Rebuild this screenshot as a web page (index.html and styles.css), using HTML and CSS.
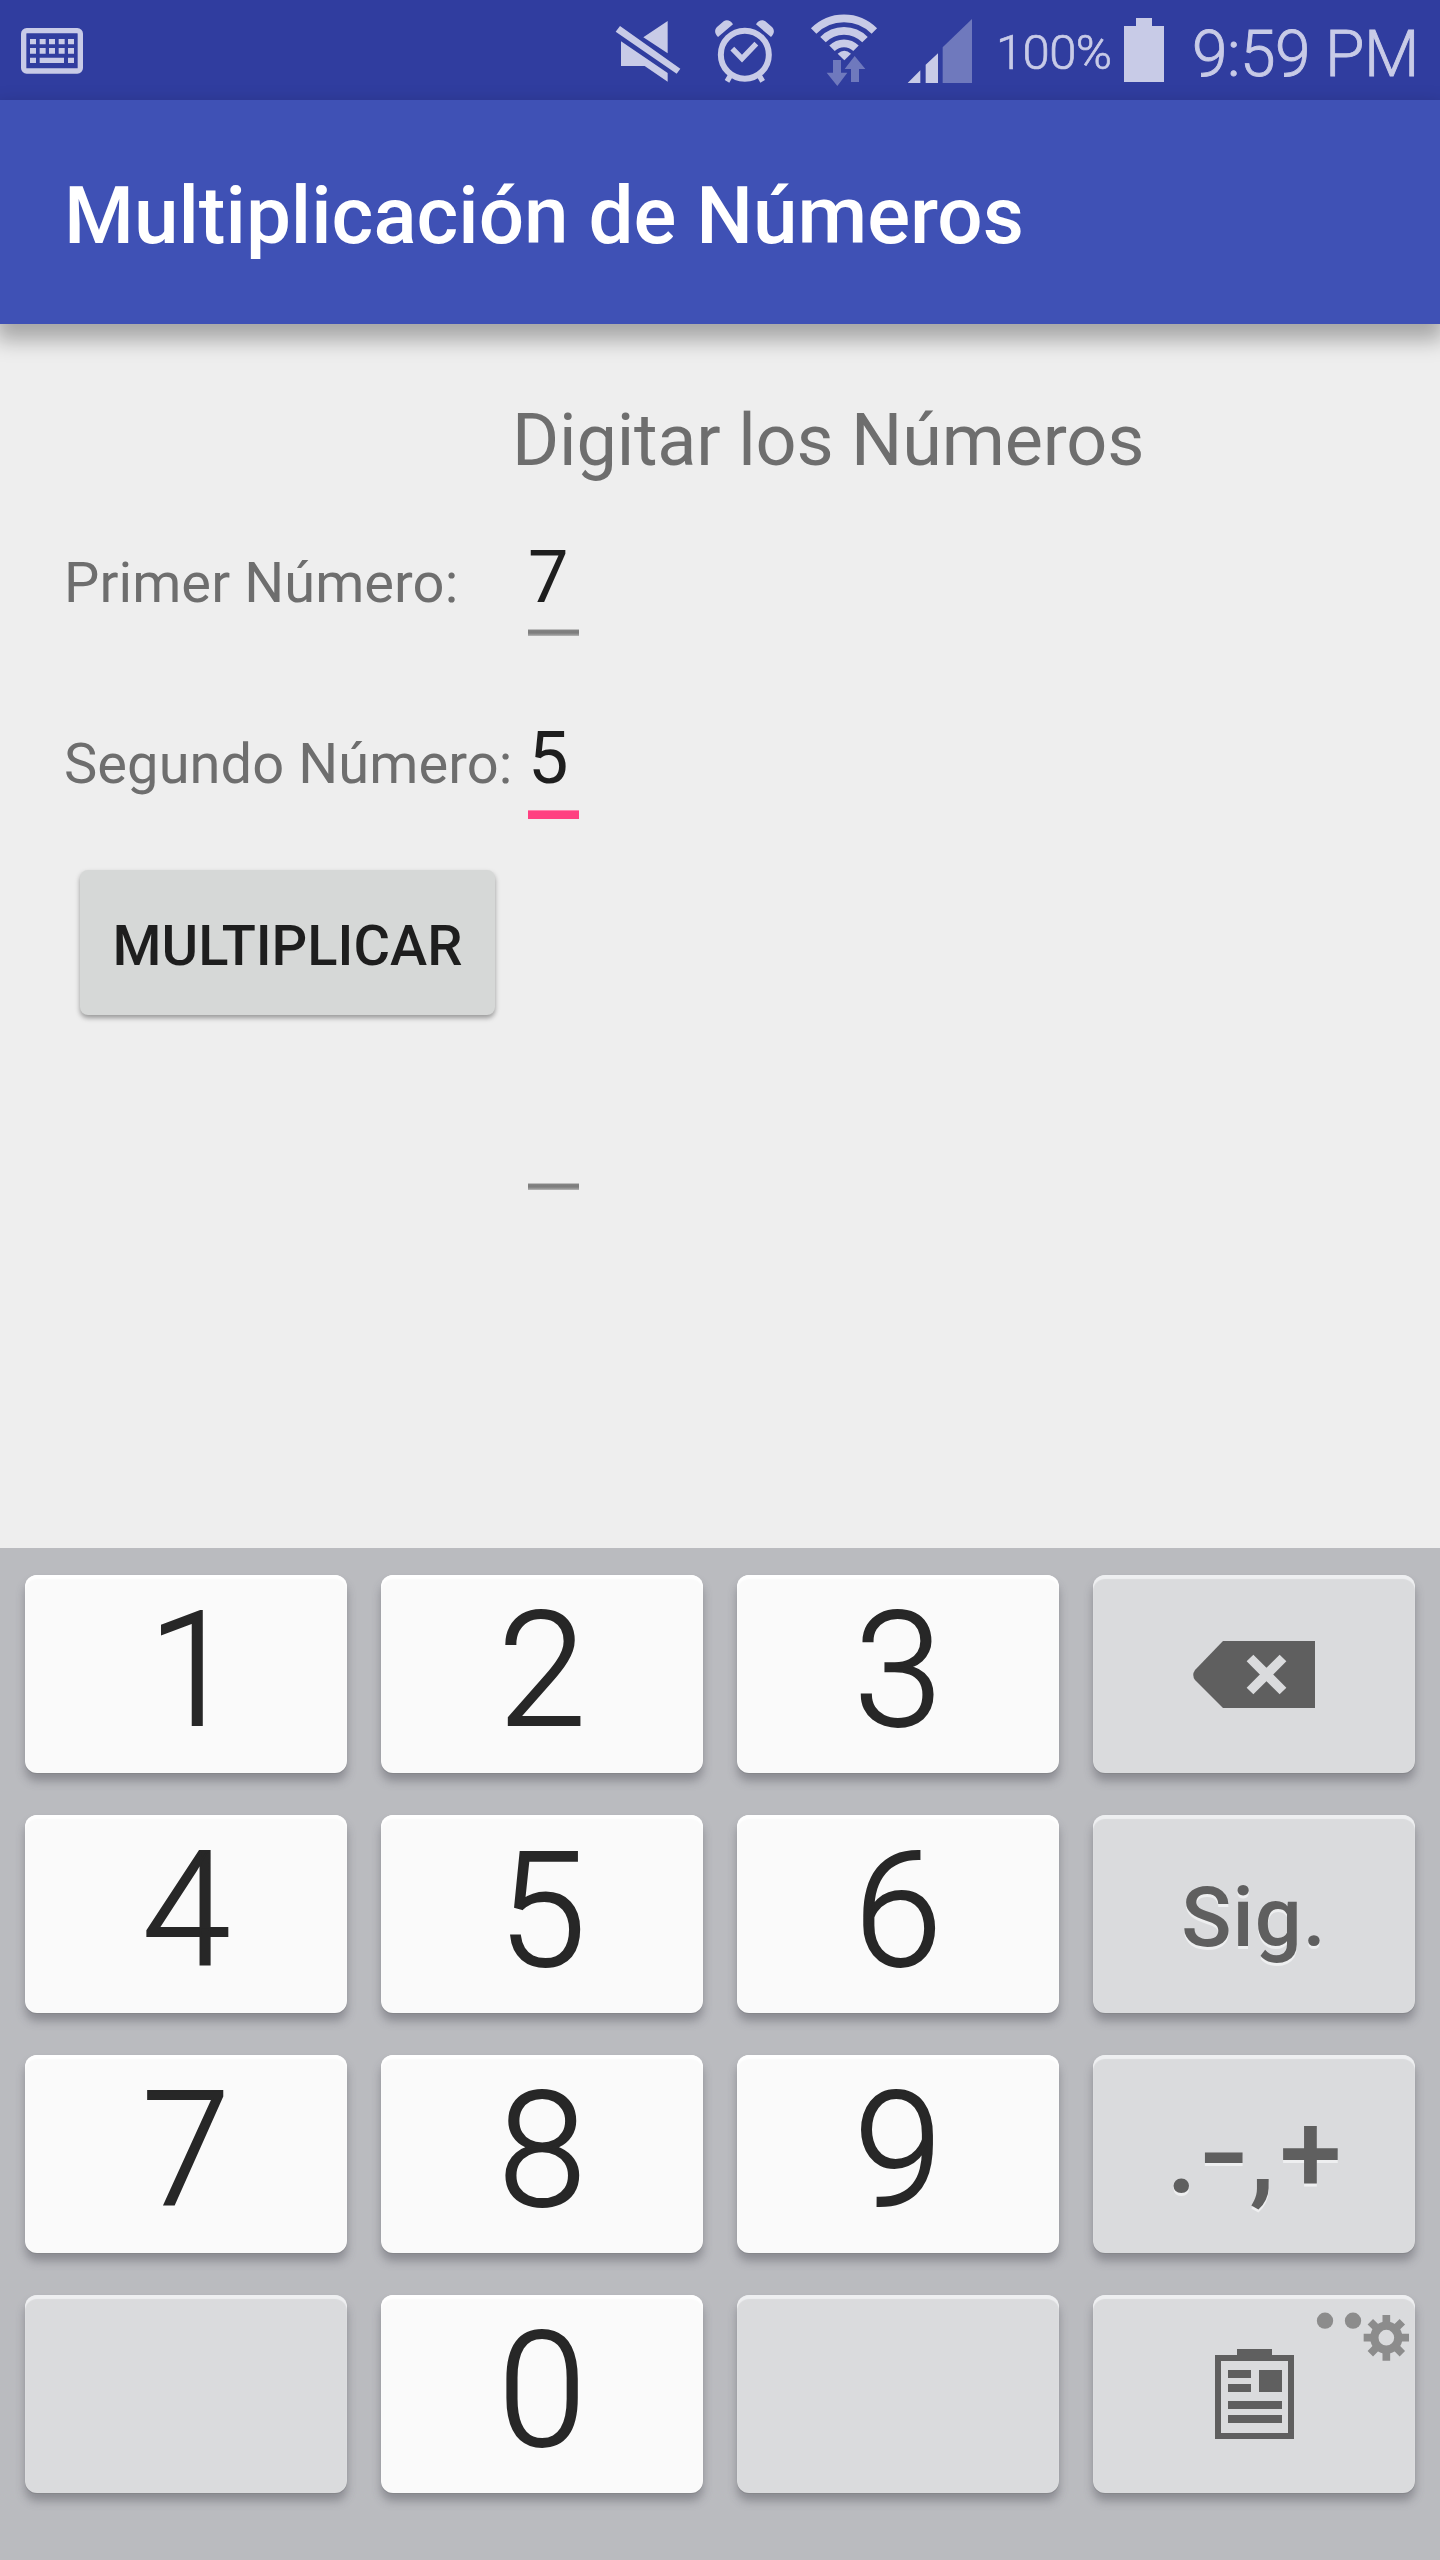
FILE: index.html
```html
<!DOCTYPE html>
<html lang="es">
<head>
<meta charset="utf-8">
<title>Multiplicación de Números</title>
<link rel="stylesheet" href="styles.css">
</head>
<body>
<div class="screen">
  <div class="status-bar">
    <svg class="status-icon keyboard-icon" viewBox="63 0 186 300">
      <rect x="71" y="92" width="170" height="121" rx="9" fill="none" stroke="currentColor" stroke-width="16"/>
      <path fill="currentColor" d="M90 117h18v16H90zM119 117h18v16h-18zM147 117h18v16h-18zM176 117h18v16h-18zM204 117h18v16h-18zM90 144h18v17H90zM119 144h18v17h-18zM147 144h18v17h-18zM176 144h18v17h-18zM204 144h18v17h-18zM90 173h18v16H90zM119 173h73v16h-73zM204 173h18v16h-18z"/>
    </svg>
    <svg class="status-icon mute-icon" viewBox="75 0 198 300" fill="currentColor">
      <path d="M160 112L233 63V160ZM90 78L271 206L260 221L77 95ZM93 124L233 219V245L164 198H93Z"/>
    </svg>
    <svg class="status-icon alarm-icon" viewBox="372 0 183 300">
      <circle cx="464.500" cy="164" r="72" fill="none" stroke="currentColor" stroke-width="18"/>
      <path d="M427 146L456 176L499 131" fill="none" stroke="currentColor" stroke-width="16"/>
      <path d="M424 222L411 244M505 222L518 244" stroke="currentColor" stroke-width="16"/>
      <path fill="currentColor" d="M384 111L429 73C422 61 410 57 401 64L381 81C373 89 373 101 384 111ZM543 111L498 73C505 61 517 57 526 64L546 81C554 89 554 101 543 111Z"/>
    </svg>
    <svg class="status-icon wifi-icon" viewBox="660 0 204 300">
      <g fill="none" stroke="currentColor" stroke-width="23">
        <path d="M671 93A128 128 0 0 1 853 93"/>
        <path d="M699 119A88 88 0 0 1 825 119"/>
        <path d="M726 145A51 51 0 0 1 798 145"/>
      </g>
      <path fill="currentColor" d="M743 161Q763 144 783 161L763 181Z"/>
      <path class="dim" d="M729 180H753V218H772L742 258L710 218H729ZM783 246V207H764L794 168L826 207H807V246Z"/>
    </svg>
    <svg class="status-icon signal-icon" viewBox="951 0 198 300" fill="currentColor">
      <path d="M953 249H991V211ZM1007 249V194L1044 160V249Z"/>
      <path class="dim" d="M1058 249V142L1146 57V249Z"/>
    </svg>
    <span class="battery-level">100%</span>
    <svg class="status-icon battery-icon" viewBox="0 0 40 100" fill="currentColor">
      <path d="M12 18H28V26H40V82H0V26H12Z"/>
    </svg>
    <span class="clock">9:59 PM</span>
  </div>

  <header class="app-bar"><h1>Multiplicación de Números</h1></header>

  <main class="content">
    <div class="heading">Digitar los Números</div>
    <div class="row">
      <label class="label">Primer Número:</label>
      <div class="field">7</div>
    </div>
    <div class="row">
      <label class="label">Segundo Número:</label>
      <div class="field focused">5</div>
    </div>
    <button class="action">MULTIPLICAR</button>
    <div class="row result">
      <span class="label"></span>
      <div class="field">&nbsp;</div>
    </div>
  </main>

  <div class="keypad">
    <div class="key one">1</div>
    <div class="key">2</div>
    <div class="key">3</div>
    <div class="key fn icon">
      <svg width="122" height="67" viewBox="0 0 122 67">
        <path fill="#5f5f5f" d="M30 0H122V67H30L2 39Q-1.500 34 2 29Z"/>
        <path d="M57 17L90 50M90 17L57 50" stroke="#dadbdd" stroke-width="9.500"/>
      </svg>
    </div>
    <div class="key">4</div>
    <div class="key">5</div>
    <div class="key">6</div>
    <div class="key fn next">Sig.</div>
    <div class="key">7</div>
    <div class="key">8</div>
    <div class="key">9</div>
    <div class="key fn symbols"><span>.</span><span class="dash">-</span><span>,</span><span class="plus">+</span></div>
    <div class="key fn"></div>
    <div class="key">0</div>
    <div class="key fn"></div>
    <div class="key fn icon">
      <svg width="79" height="90" viewBox="0 0 79 90" fill="#5f5f5f">
        <path fill-rule="evenodd" d="M0 6H22V0H57V6H79V90H0ZM6 12V84H73V12Z"/>
        <path d="M13 21H36V29H13ZM13 35H36V43H13ZM44 21H67V43H44ZM13 52H67V60H13ZM13 66H67V74H13Z"/>
      </svg>
      <svg class="key-hint" width="94" height="49" viewBox="438 96 282 147" fill="#8c8c8c">
        <circle cx="465" cy="122" r="24.500"/>
        <circle cx="549" cy="122" r="24.500"/>
        <circle cx="649" cy="173" r="36" fill="none" stroke="#8c8c8c" stroke-width="25"/>
        <path d="M649 105V132M649 214V242M581 173H608M690 173H717M601 125L620 144M678 202L697 221M697 125L678 144M620 202L601 221" stroke="#8c8c8c" stroke-width="23"/>
      </svg>
    </div>
  </div>
</div>
</body>
</html>
```
FILE: styles.css
```css
* { box-sizing: border-box; }

body {
  margin: 0;
  font-family: Roboto, "Noto Sans", sans-serif;
}

.screen {
  width: 1440px;
  height: 2560px;
  display: flex;
  flex-direction: column;
  background: #eee;
  overflow: hidden;
}

.status-bar {
  flex: none;
  height: 100px;
  padding-left: 21px;
  display: flex;
  background: #303d9f;
  color: #c8cbe7;
}
.status-icon { height: 100px; flex: none; }
.dim { fill: #6f79bd; }
.keyboard-icon { width: 62px; margin-right: 532px; }
.mute-icon { width: 66px; margin-right: 33px; }
.alarm-icon { width: 61px; margin-right: 35px; }
.wifi-icon { width: 68px; margin-right: 29px; }
.signal-icon { width: 66px; margin-right: 23px; }
.battery-level {
  width: 128px;
  font-size: 49px;
  line-height: 105px;
  font-weight: 300;
  letter-spacing: -.6px;
  -webkit-text-stroke: .7px currentColor;
}
.battery-icon { width: 40px; margin-right: 28px; }
.clock {
  font-size: 64px;
  font-weight: 300;
  line-height: 109px;
  letter-spacing: -.5px;
  -webkit-text-stroke: .9px currentColor;
  white-space: nowrap;
}

.app-bar {
  flex: none;
  height: 224px;
  padding: 7px 64px 0;
  display: flex;
  align-items: center;
  background: #3f51b5;
  box-shadow: 0 12px 20px 4px rgba(0, 0, 0, .3);
  color: #fff;
}
.app-bar h1 {
  margin: 0;
  font-size: 80px;
  font-weight: 500;
}

.content {
  flex: 1;
  padding: 75px 64px 0;
  display: flex;
  flex-direction: column;
  align-items: flex-start;
  color: #6e6e6e;
}
.heading {
  height: 84px;
  margin-left: 448px;
  font-size: 72px;
  line-height: 84px;
  letter-spacing: -.18px;
}
.row {
  height: 181px;
  padding-top: 53px;
  display: flex;
  align-items: baseline;
}
.label {
  width: 464px;
  font-size: 56px;
  line-height: 66px;
  letter-spacing: .08px;
  white-space: nowrap;
}
.field {
  width: 51px;
  height: 101px;
  font-size: 72px;
  line-height: 84px;
  color: #1e1e1e;
  background: linear-gradient(#bdbdbd 0 1px, #838383 1px 2px, #7a7a7a 3px, #8a8a8a 5px, #b9b9b9 7px) 0 93px / 51px 7px no-repeat;
}
.field.focused {
  height: 104px;
  background: linear-gradient(#ff80ab 0 1px, #ff4081 1px) 0 93px / 51px 9px no-repeat;
}
.action {
  width: 415px;
  height: 145px;
  margin: 25px 0 22px 16px;
  padding: 7px 0 0;
  border: 0;
  border-radius: 8px;
  background: #d6d8d7;
  box-shadow: 0 3px 5px rgba(0, 0, 0, .36);
  color: #1e1e1e;
  font: 500 56px Roboto, sans-serif;
}

.keypad {
  flex: none;
  height: 1012px;
  padding: 27px 25px 0;
  display: grid;
  grid-template-columns: repeat(4, 322px);
  grid-auto-rows: 198px;
  gap: 42px 34px;
  background: #babbbf;
}
.key {
  position: relative;
  display: flex;
  align-items: center;
  justify-content: center;
  padding-bottom: 6px;
  border-radius: 12px;
  background: #fafafa;
  box-shadow: inset 0 4px 2px #fff, 0 1px 0 #86878b, 0 8px 10px rgba(70, 70, 80, .4);
  color: #272727;
  font-size: 159px;
  font-weight: 300;
  line-height: 192px;
  -webkit-text-stroke: 1.8px currentColor;
}
.key.one { padding-left: 12px; }
.key.fn {
  background: #dadbdd;
  box-shadow: inset 0 4px 1px #eeeff1, 0 1px 0 #86878b, 0 8px 10px rgba(70, 70, 80, .4);
  color: #5f5f5f;
  font-weight: 500;
  text-shadow: 0 3px 0 #eeeff0;
  -webkit-text-stroke: 0;
}
.key.icon { padding: 0; }
.key.next { font-size: 83px; padding: 7px 0 0; letter-spacing: 1px; }
.key.symbols { font-size: 112px; padding: 0; }
.dash { margin: 0 6px 0 8px; transform: scaleX(1.3); }
.plus { margin-left: 5px; }
.key-hint {
  position: absolute;
  right: 5px;
  top: 17px;
}
```
